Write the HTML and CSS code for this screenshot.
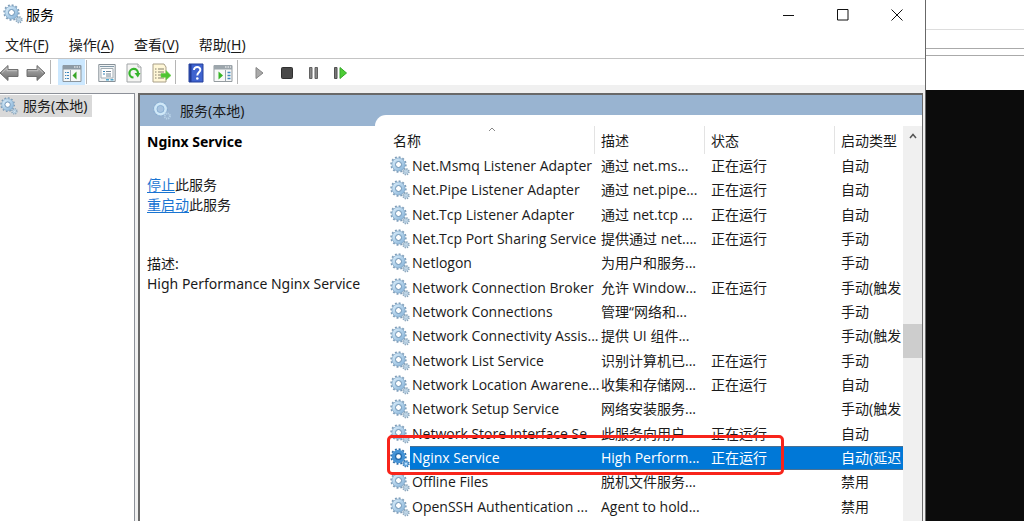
FILE: index.html
```
<!DOCTYPE html>
<html lang="zh-CN">
<head>
<meta charset="utf-8">
<title>服务</title>
<link rel="stylesheet" href="styles.css">
</head>
<body>
<svg class="defs" aria-hidden="true">
  <defs>
    <linearGradient id="steel" x1="0" y1="0" x2="1" y2="1"><stop offset="0" stop-color="#d3e8f7"/><stop offset="1" stop-color="#8fb9dc"/></linearGradient>
    <linearGradient id="grey" x1="0" y1="0" x2="0" y2="1"><stop offset="0" stop-color="#b5b5b5"/><stop offset="1" stop-color="#6c6c6c"/></linearGradient>
    <symbol id="gear" viewBox="0 0 20 20">
      <circle cx="8.5" cy="8.5" r="7.300" fill="none" stroke="#7d9cb8" stroke-width="1.8" stroke-dasharray="1.9 1.922"/>
      <circle cx="8.5" cy="8.5" r="4.8" fill="none" stroke="url(#steel)" stroke-width="4"/>
      <circle cx="8.5" cy="8.5" r="6.500" fill="none" stroke="#86abc9" stroke-width=".7"/>
      <circle cx="8.5" cy="8.5" r="3" fill="#fff" stroke="#668fb3" stroke-width="1"/>
      <circle cx="16" cy="15.8" r="2.8" fill="#c5dbeb" stroke="#8ba5ba" stroke-width="1.8" stroke-dasharray="1.2 1"/>
      <circle cx="16" cy="15.8" r="1" fill="#f5faff" stroke="#8eb0cb" stroke-width=".6"/>
    </symbol>
    <symbol id="gear-selected" viewBox="0 0 20 20">
      <circle cx="8.5" cy="8.5" r="7.300" fill="none" stroke="#2b6ca8" stroke-width="1.8" stroke-dasharray="1.9 1.922"/>
      <circle cx="8.5" cy="8.5" r="4.8" fill="none" stroke="#4593d6" stroke-width="4"/>
      <circle cx="8.5" cy="8.5" r="2.9" fill="#fff" stroke="#1a63a6" stroke-width="1.2"/>
      <circle cx="16" cy="15.8" r="2.8" fill="#72b1e5" stroke="#397bb5" stroke-width="1.8" stroke-dasharray="1.2 1"/>
      <circle cx="16" cy="15.8" r="1" fill="#c9e7ff"/>
    </symbol>
    <symbol id="gear-pale" viewBox="0 0 20 20">
      <circle cx="8.5" cy="8" r="6.8" fill="none" stroke="#86acd0" stroke-width="1.4" stroke-dasharray="1.6 1.96"/>
      <circle cx="8.5" cy="8" r="5" fill="none" stroke="#cfe8f8" stroke-width="2.8"/>
      <circle cx="8.5" cy="8" r="3.6" fill="#a8c4e0" stroke="#78a5cc" stroke-width=".6"/>
      <circle cx="15.3" cy="15" r="2.6" fill="none" stroke="#b9d3e8" stroke-width="2" stroke-dasharray="1.2 .84"/>
    </symbol>
    <symbol id="arrow" viewBox="0 0 20 18">
      <path d="M1 9 9 1.5V5.500H19V12.500H9V16.500Z" fill="url(#grey)" stroke="#707070"/>
      <path d="M3 8.700 8 4V6.700H18" fill="none" stroke="#c6c6c6" stroke-width=".8"/>
    </symbol>
  </defs>
</svg>
<div class="desktop">
  <main class="window">
    <header class="titlebar">
      <svg class="app-icon"><use href="#gear"/></svg>
      <h1>服务</h1>
      <div class="captions">
        <button aria-label="最小化"><svg viewBox="0 0 12 12"><path d="M0 6.500H11"/></svg></button>
        <button aria-label="最大化"><svg viewBox="0 0 12 12"><path d="M.5.5H11V11H.5Z"/></svg></button>
        <button aria-label="关闭"><svg viewBox="0 0 12 12"><path d="M.5.5 11.500 11.500M11.500.5.5 11.500"/></svg></button>
      </div>
    </header>
    <nav class="menubar">
      <button>文件(<u>F</u>)</button>
      <button>操作(<u>A</u>)</button>
      <button>查看(<u>V</u>)</button>
      <button>帮助(<u>H</u>)</button>
    </nav>
    <div class="toolbar">
      <button aria-label="后退"><svg width="20" height="18"><use href="#arrow"/></svg></button>
      <button aria-label="前进"><svg class="flip" width="20" height="18"><use href="#arrow"/></svg></button>
      <span class="sep"></span>
      <button class="active" aria-label="显示控制台树"><svg width="20" height="18" viewBox="0 0 20 18">
        <path d="M1 1.500H19V17.500H1Z" fill="#f7f8f8" stroke="#8b959c"/><path d="M1 1H19V5.500H1Z" fill="#8d9aa5"/><path d="M12 3h1.500M14.500 3H16M17 3h1" stroke="#fff"/><path d="M8.500 6V17" stroke="#9aa4ab"/><path d="M3 8.500H7M3 11.500H7M3 14.500H7" stroke="#3e87bd" stroke-width="1.2" stroke-dasharray="1 .7 3"/><path d="M14.500 7.500V15.500L10.500 11.500Z" fill="#37a525"/></svg></button>
      <span class="sep"></span>
      <button aria-label="属性"><svg width="18" height="20" viewBox="0 0 18 20">
        <path d="M.8 1.500H17.200V18.500H.8Z" fill="#f2f4f5" stroke="#879198"/><path d="M2 3.500H16" stroke="#8198a8"/><path d="M3 5.500H15V15H3Z" fill="#fff" stroke="#a0abb2"/><path d="M5 8.500H7M5 11H7" stroke="#3683b6"/><path d="M8 8.500H13M8 11H13M8 13H13" stroke="#718593"/><path d="M8 16.800H11M12.500 16.800H15.500" stroke="#4fa8d0" stroke-width="1.5"/></svg></button>
      <button aria-label="刷新"><svg width="16" height="20" viewBox="0 0 16 20">
        <path d="M1 1H12L15 4V19H1Z" fill="#f4f4f2" stroke="#a1a5a7"/><path d="M12 1V4H15" fill="#fff" stroke="#a1a5a7"/><path d="M7.500 14.500A4.300 4.300 0 1 1 12 10" fill="none" stroke="#35b52b" stroke-width="2.2"/><path d="M8.500 10H14.500L11.800 14.500Z" fill="#35b52b"/></svg></button>
      <button aria-label="导出列表"><svg width="19" height="20" viewBox="0 0 19 20">
        <path d="M1 1H12L14 4V19H1Z" fill="#fff7d7" stroke="#a89f88"/><path d="M3 6h1.500M3 9h1.500M3 12h1.500M3 15h1.500M6 6h6M6 9h6M6 12h4M6 15h6" stroke="#85806f"/><path d="M9 10.500H14V7.500L19 12.500 14 17V14.300H9Z" fill="#4fc531" stroke="#6bcf4d" stroke-width=".6"/></svg></button>
      <span class="sep"></span>
      <button aria-label="帮助"><svg width="16" height="20" viewBox="0 0 16 20">
        <path d="M1 1H15V19H1Z" fill="#3f63cf" stroke="#24409b"/><path d="M2.500 1V19" stroke="#213a94" stroke-width="2"/><path d="M6 7C6 3 12.500 3.200 12.300 7 12.100 9.200 9.300 9.500 9.300 12.500" fill="none" stroke="#fff" stroke-width="2"/><circle cx="9.300" cy="15.500" r="1.300" fill="#fff"/></svg></button>
      <button aria-label="显示操作窗格"><svg width="20" height="18" viewBox="0 0 20 18">
        <path d="M1 1.500H19V17.500H1Z" fill="#f7f8f8" stroke="#949b9f"/><path d="M1 1H19V5.500H1Z" fill="#9da6ac"/><path d="M12 3h1.500M14.500 3H16M17 3h1" stroke="#fff"/><path d="M12.500 6V17" stroke="#9aa4ab"/><path d="M14.500 8.500H17.500M14.500 11.500H17.500M14.500 14.500H17.500" stroke="#3e87bd" stroke-width="1.3"/><path d="M5.500 7.500V15.500L10 11.500Z" fill="#37b525"/></svg></button>
      <span class="sep"></span>
      <div class="actions">
        <button aria-label="启动"><svg width="12" height="14" viewBox="0 0 12 14"><path d="M2 1.500V12.500L9 7Z" fill="#aaa" stroke="#858585"/></svg></button>
        <button aria-label="停止"><svg width="14" height="14" viewBox="0 0 14 14"><rect x="1.500" y="1.500" width="11" height="11" rx="1" fill="#494949" stroke="#303030"/></svg></button>
        <button aria-label="暂停"><svg width="12" height="14" viewBox="0 0 12 14"><path d="M1.500 1.500H4V12.500H1.500ZM7 1.500H9.500V12.500H7Z" fill="#888" stroke="#626262"/></svg></button>
        <button aria-label="重启动"><svg width="16" height="14" viewBox="0 0 16 14"><path d="M1.500 1.500H4V12.500H1.500Z" fill="#777" stroke="#505050"/><path d="M7 1.500V12.500L13.500 7Z" fill="#4dcc35" stroke="#35a928"/></svg></button>
      </div>
    </div>
    <div class="panes">
      <aside class="tree"><a class="node" href="#services"><svg class="tree-icon"><use href="#gear"/></svg><span>服务(本地)</span></a></aside>
      <section class="content" id="services">
        <h2 class="band"><svg class="band-icon"><use href="#gear-pale"/></svg>服务(本地)</h2>
        <div class="body">
          <div class="info">
            <h3>Nginx Service</h3>
            <p><a href="#stop">停止</a>此服务<br><a href="#restart">重启动</a>此服务</p>
            <div>描述:</div>
            <div class="about">High Performance Nginx Service</div>
          </div>
          <div class="list">
            <div class="rows">
            <table>
              <colgroup><col class="c-icon"><col class="c-name"><col class="c-desc"><col class="c-state"><col></colgroup>
              <thead><tr><th colspan="2">名称<svg class="sort" viewBox="0 0 8 5"><path d="M1 4 4 1 7 4"/></svg></th><th>描述</th><th>状态</th><th>启动类型</th></tr></thead>
              <tbody>
                <tr><td><svg><use href="#gear"/></svg></td><td>Net.Msmq Listener Adapter</td><td>通过 net.ms...</td><td>正在运行</td><td>自动</td></tr>
                <tr><td><svg><use href="#gear"/></svg></td><td>Net.Pipe Listener Adapter</td><td>通过 net.pipe...</td><td>正在运行</td><td>自动</td></tr>
                <tr><td><svg><use href="#gear"/></svg></td><td>Net.Tcp Listener Adapter</td><td>通过 net.tcp ...</td><td>正在运行</td><td>自动</td></tr>
                <tr><td><svg><use href="#gear"/></svg></td><td>Net.Tcp Port Sharing Service</td><td>提供通过 net....</td><td>正在运行</td><td>手动</td></tr>
                <tr><td><svg><use href="#gear"/></svg></td><td>Netlogon</td><td>为用户和服务...</td><td></td><td>手动</td></tr>
                <tr><td><svg><use href="#gear"/></svg></td><td>Network Connection Broker</td><td>允许 Window...</td><td>正在运行</td><td>手动(触发</td></tr>
                <tr><td><svg><use href="#gear"/></svg></td><td>Network Connections</td><td>管理“网络和...</td><td></td><td>手动</td></tr>
                <tr><td><svg><use href="#gear"/></svg></td><td>Network Connectivity Assis...</td><td>提供 UI 组件...</td><td></td><td>手动(触发</td></tr>
                <tr><td><svg><use href="#gear"/></svg></td><td>Network List Service</td><td>识别计算机已...</td><td>正在运行</td><td>手动</td></tr>
                <tr><td><svg><use href="#gear"/></svg></td><td>Network Location Awarene...</td><td>收集和存储网...</td><td>正在运行</td><td>自动</td></tr>
                <tr><td><svg><use href="#gear"/></svg></td><td>Network Setup Service</td><td>网络安装服务...</td><td></td><td>手动(触发</td></tr>
                <tr><td><svg><use href="#gear"/></svg></td><td>Network Store Interface Se</td><td>此服务向用户</td><td>正在运行</td><td>自动</td></tr>
                <tr class="selected"><td><svg><use href="#gear-selected"/></svg><span class="marker"></span></td><td>Nginx Service</td><td>High Perform...</td><td>正在运行</td><td>自动(延迟</td></tr>
                <tr><td><svg><use href="#gear"/></svg></td><td>Offline Files</td><td>脱机文件服务...</td><td></td><td>禁用</td></tr>
                <tr><td><svg><use href="#gear"/></svg></td><td>OpenSSH Authentication ...</td><td>Agent to hold...</td><td></td><td>禁用</td></tr>
              </tbody>
            </table>
            </div>
            <div class="scrollbar"><button aria-label="向上滚动"><svg viewBox="0 0 8 6"><path d="M1 5 4 1.500 7 5"/></svg></button><div class="track"><div class="thumb"></div></div></div>
          </div>
        </div>
      </section>
    </div>
  </main>
  <div class="behind"><div class="strip tall"></div><div class="strip mid"></div><div class="strip thin"></div><div class="strip last"></div><div class="terminal"></div></div>
</div>
</body>
</html>
```
FILE: styles.css
```
* { box-sizing: border-box; }
body { margin: 0; overflow: hidden; background: #fff; color: #1a1a1a; font: 14px/20px "Noto Sans", "Noto Sans CJK SC", sans-serif; }
h1, h2, h3, p { margin: 0; font-size: inherit; font-weight: normal; }
button { border: 0; padding: 0; background: none; color: inherit; font: inherit; }
svg { display: block; }
.defs { position: absolute; width: 0; height: 0; }

.desktop { display: flex; height: 100vh; }
.window { flex: 1; min-width: 0; display: flex; flex-direction: column; border-right: 1px solid #686868; }

.titlebar { display: flex; align-items: center; height: 29px; }
.app-icon { width: 20px; height: 20px; margin: 0 3px 2px; }
.titlebar h1 { color: #000; }
.captions { display: flex; margin-left: auto; padding-right: 1px; }
.captions button { display: grid; place-items: center; width: 54px; height: 29px; }
.captions svg { width: 12px; height: 12px; fill: none; stroke: #111; stroke-width: 1; }

.menubar { display: flex; gap: 20px; height: 30px; padding: 3px 5px 0; align-items: center; border-bottom: 1px solid #c4c4c4; }
.menubar u { text-underline-offset: 2px; }

.toolbar { display: flex; gap: 1px; height: 26px; margin-left: -4px; align-items: center; }
.toolbar button { display: grid; place-items: center; width: 26px; height: 26px; padding-top: 1px; }
.toolbar .active { width: 27px; background: #cce8ff; }
.flip { transform: scaleX(-1); }
.sep { width: 1px; height: 24px; margin-right: 6px; background: #b5b5b5; }
.actions { display: flex; gap: 1px; padding-left: 2px; }

.panes { flex: 1; min-height: 0; display: flex; gap: 3px; padding: 8px 2px 0 0; background: #f0f0f0; }
.tree { flex: 0 0 135px; background: #fff; border: solid #8d9199; border-width: 1px 1px 0 0; }
.node { display: inline-flex; align-items: center; height: 22px; margin-top: 1px; padding-right: 5px; gap: 5px; background: #d9d9d9; color: inherit; text-decoration: none; }
.tree-icon { width: 18px; height: 18px; }
.content { flex: 1; min-width: 0; display: flex; flex-direction: column; background: #fff; border: solid #696969; border-width: 2px 1px 0 2px; }
.band { display: flex; align-items: center; gap: 8px; height: 31px; padding-left: 12px; background: #99b4d1; }
.band-icon { width: 20px; height: 20px; }
.body { flex: 1; min-height: 0; display: flex; }
.info { flex: 0 0 235px; padding: 6px 0 0 7px; }
.info h3 { color: #000; font-weight: bold; }
.info p { margin: 23px 0 39px; }
.info a { color: #1874d2; text-underline-offset: 2px; }
.about { white-space: nowrap; }

.list { flex: 1; min-width: 0; display: flex; margin-top: -11px; padding-top: 11px; background: #fff; border-radius: 11px 0 0 0; }
.rows { flex: 1; min-width: 0; overflow: hidden; padding-left: 11px; }
table { width: 100%; table-layout: fixed; border-collapse: separate; border-spacing: 0; white-space: nowrap; font-family: "Open Sans", "Noto Sans CJK SC", sans-serif; }
.c-icon { width: 24px; }
.c-name { width: 185px; }
.c-desc { width: 110px; }
.c-state { width: 130px; }
th { position: relative; height: 28px; padding: 2px 0 0 7px; text-align: left; font-weight: normal; border-right: 1px solid #e3e3e3; }
th:last-child { border-right: 0; }
.sort { position: absolute; top: 1px; left: 49%; width: 8px; height: 5px; fill: none; stroke: #888; }
td { height: 24px; padding: 0 0 0 7px; }
th:nth-child(n+2), td:nth-child(n+3) { padding-left: 6px; }
tr:nth-child(3n) td { height: 25px; }
td:nth-child(1) { position: relative; padding-left: 4px; }
td:nth-child(2) { padding-left: 2px; }
td svg { width: 20px; height: 20px; }
.selected td:not(:first-child) { background: #0078d7; color: #fff; border: solid #4b7192; border-width: 1px 0; }
.marker { position: absolute; z-index: 1; top: -11px; left: 1px; width: 397px; height: 40px; border: 3px solid #f8241b; border-radius: 5px; }

.scrollbar { flex: 0 0 19px; display: flex; flex-direction: column; background: #f0f0f0; }
.scrollbar button { display: grid; place-items: center; height: 20px; }
.scrollbar button svg { width: 8px; height: 6px; fill: none; stroke: #555; stroke-width: 1.5; }
.track { flex: 1; padding-top: 178px; }
.thumb { height: 34px; background: #cdcdcd; }

.behind { flex: 0 0 98px; display: flex; flex-direction: column; }
.strip { border-bottom: 1px solid #aaa; }
.tall { height: 30px; border-color: #ddd; }
.mid { height: 19px; }
.thin { height: 7px; }
.last { height: 34px; border: 0; }
.terminal { flex: 1; background: #0c0c0c; }
```
